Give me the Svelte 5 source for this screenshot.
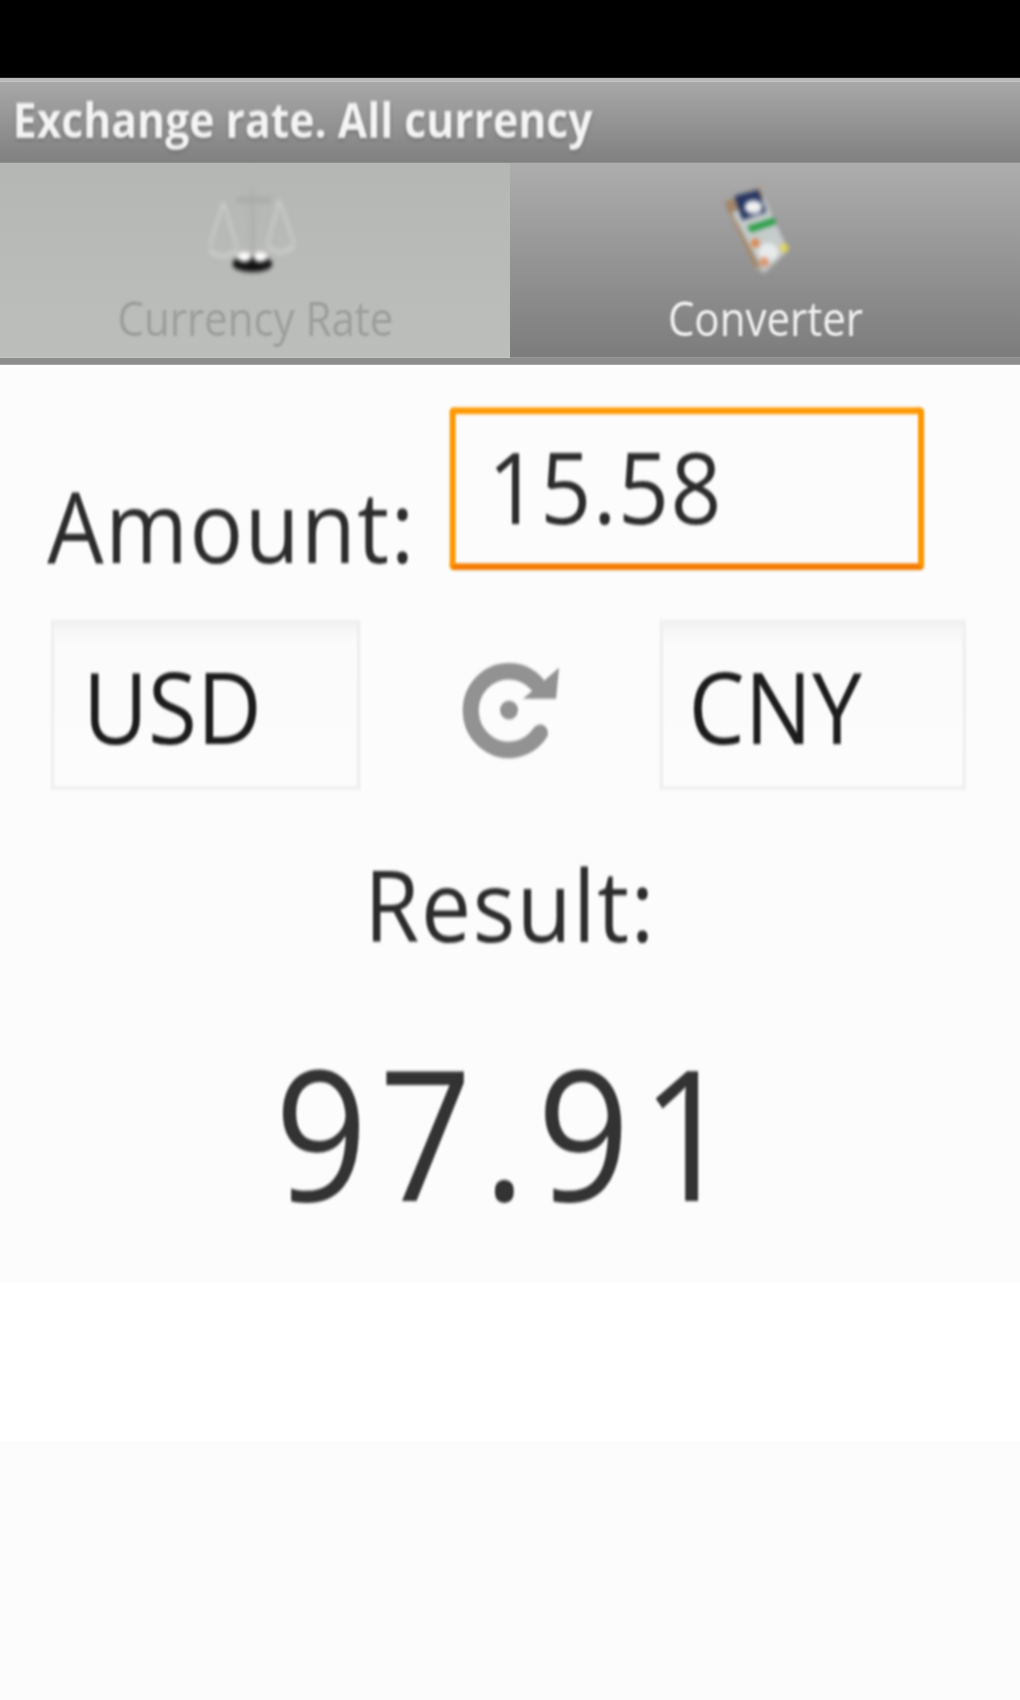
<script>
  let amount = $state('15.58');
  const tabs = ['Currency Rate', 'Converter'];
</script>

<div class="screen">
  <!-- laid out in the phone's own 320x480 units, stretched up to the window -->
  <div class="phone">
    <div class="status"></div>

    <div class="title">
      <span class="title-text soft">Exchange rate. All currency</span>
    </div>

    <div class="tabs">
      <div class="tab tab-idle">
        <svg class="tab-icon" viewBox="0 0 120 120" preserveAspectRatio="none">
          <g transform="translate(-15 0)">
            <g fill="none" stroke="#c9cac8" stroke-width="3">
              <path d="M73 16V85" stroke="#b0b1af" stroke-width="5" />
              <path d="M58 30H92" stroke="#a8a9a7" stroke-width="5" />
              <path d="M44 32L30 76M44 32L58 78M100 30L88 74M100 30L115 74" />
              <path d="M30 80Q44 92 58 80M88 76Q100 88 115 76" stroke-width="5" />
            </g>
            <ellipse cx="73" cy="94" rx="20" ry="8" fill="#111" />
            <ellipse cx="65" cy="87" rx="7" ry="5" fill="#fff" />
            <ellipse cx="81" cy="87" rx="7" ry="5" fill="#fff" />
          </g>
        </svg>
        <span class="tab-label">{tabs[0]}</span>
      </div>
      <div class="tab tab-active">
        <svg class="tab-icon" viewBox="0 0 120 120" preserveAspectRatio="none">
          <g transform="translate(-8 0)">
            <polygon points="28,32 63,18 92,80 68,103 58,97" fill="#c6cbcb" />
            <polygon points="28,32 63,18 67,28 33,44" fill="#a08468" />
            <polygon points="28,32 35,42 65,98 58,97" fill="#a08468" />
            <polygon points="38,26 62,20 70,42 46,50" fill="#24335e" />
            <ellipse cx="57" cy="37" rx="9" ry="7" fill="#f0f0f0" />
            <polygon points="52,57 77,49 79,53 55,61" fill="#1f9a3c" stroke="#1f9a3c" stroke-width="2" />
            <ellipse cx="72" cy="82" rx="10" ry="9" fill="#e8ebeb" />
            <circle cx="59" cy="73" r="4" fill="#e07f3c" />
            <circle cx="68" cy="92" r="4.5" fill="#dd9068" />
            <circle cx="88" cy="78" r="4" fill="#e6d94e" />
          </g>
        </svg>
        <span class="tab-label">{tabs[1]}</span>
      </div>
    </div>
    <div class="tabs-edge"></div>

    <div class="form soft">
      <div class="amount-row">
        <span class="amount-label">Amount:</span>
        <input class="amount-input" bind:value={amount} />
      </div>

      <div class="currency-row">
        <div class="spinner">USD</div>
        <svg class="swap" viewBox="0 0 100 106" preserveAspectRatio="none">
          <path d="M78 28A38 38 0 1 0 81 75" fill="none" stroke="#929292" stroke-width="16" stroke-linecap="round" />
          <polygon points="100,12 97,42 64,42" fill="#929292" />
          <circle cx="50" cy="53" r="9" fill="#929292" />
        </svg>
        <div class="spinner spinner-to">CNY</div>
      </div>

      <div class="result-label">Result:</div>
      <div class="result-value">97.91</div>
    </div>

    <div class="band"></div>
  </div>
</div>

<style>
  :global(body) {
    background: #fcfcfc;
  }

  .screen {
    width: 1020px;
    height: 1700px;
    overflow: hidden;
  }

  .phone {
    width: 320px;
    height: 480px;
    background: #fcfcfc;
    font-family: 'Open Sans', 'Liberation Sans', sans-serif;
    transform: scale(3.1875, 3.5417);
    transform-origin: top left;
  }

  .soft {
    filter: blur(0.4px);
  }

  .status {
    height: 22px;
    background: #000;
  }

  .title {
    height: 23.7px;
    box-sizing: border-box;
    display: flex;
    align-items: center;
    padding: 0 0 1px 4px;
    border-top: 1px solid #b8b8b8;
    background: linear-gradient(#a8a8a8, #808080);
  }

  .title-text {
    font-size: 13.4px;
    font-weight: 700;
    color: #f4f4f4;
    text-shadow: 0 0.6px 0.8px #666;
    white-space: nowrap;
  }

  .tabs {
    display: grid;
    grid-template-columns: 160.3px 1fr;
    height: 55.6px;
  }

  .tab {
    display: flex;
    flex-direction: column;
    align-items: center;
    padding-top: 2.3px;
  }

  .tab-idle {
    background: linear-gradient(#b5b7b5, #bcbebb);
    color: #9d9e9c;
  }

  .tab-active {
    background: linear-gradient(#adadad, #7c7c7c);
    color: #f2f2f2;
  }

  .tab-icon {
    width: 37.6px;
    height: 33.9px;
    filter: blur(0.7px);
  }

  .tab-label {
    font-size: 13.2px;
    line-height: 17px;
    white-space: nowrap;
    filter: blur(0.3px);
  }

  .tabs-edge {
    height: 1.4px;
    background: #8e8e8e;
  }

  .form {
    height: 259.1px;
    color: #2c2c2c;
  }

  .amount-row {
    display: flex;
    align-items: flex-end;
    padding: 12px 0 0 14.8px;
  }

  .amount-label {
    width: 126.2px;
    font-size: 28px;
    letter-spacing: 0.5px;
    line-height: 32px;
    margin-bottom: -2.4px;
  }

  .amount-input {
    width: 149.5px;
    height: 46.5px;
    box-sizing: border-box;
    padding: 0 0 1.3px 10px;
    border: 2px solid #ff9800;
    border-bottom-color: #f47a00;
    border-radius: 1.5px;
    outline: none;
    background: #fcfcfc;
    color: #2c2c2c;
    font-family: inherit;
    font-size: 28px;
    letter-spacing: 0.5px;
  }

  .currency-row {
    display: grid;
    grid-template-columns: 97px 1fr 95.5px;
    align-items: center;
    justify-items: center;
    height: 48px;
    margin-top: 13.9px;
    padding: 0 17.5px 0 16px;
  }

  .spinner {
    justify-self: stretch;
    height: 48px;
    box-sizing: border-box;
    padding-left: 9px;
    border: 0.5px solid #eeeeee;
    background: linear-gradient(#f3f3f3, #fbfbfb 12%, #fcfcfc);
    color: #1c1c1c;
    font-size: 28px;
    line-height: 46px;
  }

  .spinner-to {
    padding-left: 8px;
  }

  .swap {
    width: 31.4px;
    height: 31px;
    margin-top: 3px;
  }

  .result-label {
    margin-top: 16.4px;
    text-align: center;
    font-size: 28px;
    letter-spacing: 0.5px;
    line-height: 32px;
  }

  .result-value {
    margin-top: 17.2px;
    text-align: center;
    font-size: 51px;
    letter-spacing: 3.5px;
    line-height: 60px;
    color: #333;
  }

  .band {
    height: 45.2px;
    background: #fff;
  }
</style>
